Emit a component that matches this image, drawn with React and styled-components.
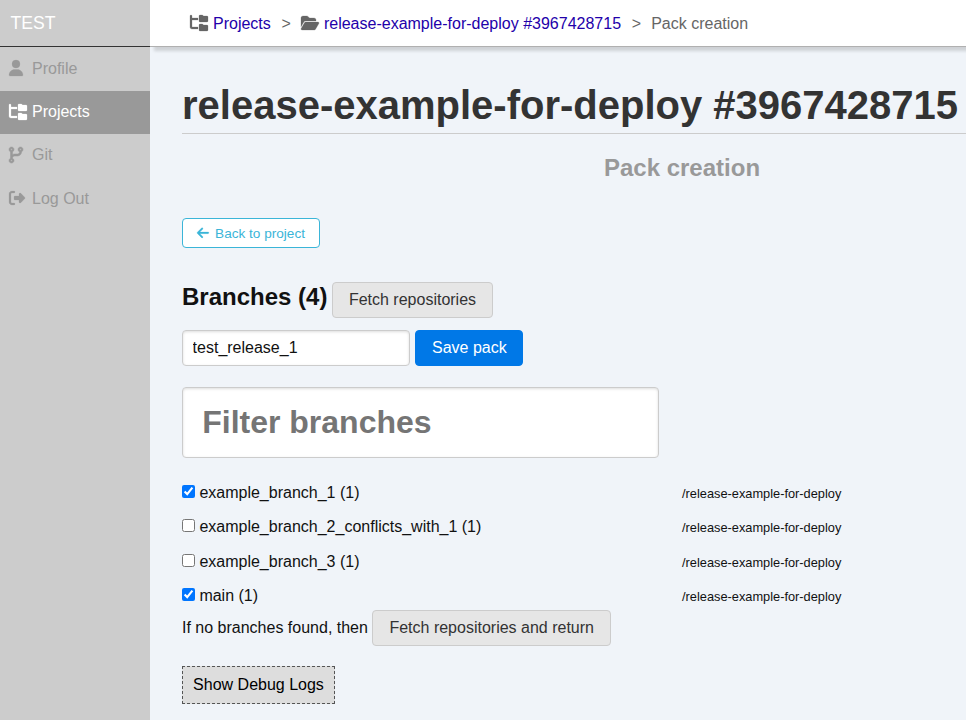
import React, { useState } from "react";
import styled, { createGlobalStyle, css } from "styled-components";
import {
  FaUser,
  FaFolderTree,
  FaCodeBranch,
  FaRightFromBracket,
  FaFolderOpen,
  FaArrowLeft,
} from "react-icons/fa6";

const GlobalStyle = createGlobalStyle`
  * { box-sizing: border-box; }
  html, body { margin: 0; height: 100%; overflow: hidden; background: #f0f4f9; }
  body { font: 16px/18px "Liberation Sans", Arial, sans-serif; color: #111; }
  button, input { font-family: inherit; }
`;

const Page = styled.div`
  display: flex;
  height: 720px;
  overflow: hidden;
`;

const Sidebar = styled.nav`
  flex: 0 0 150px;
  background: #ccc;
  z-index: 2;
`;

const Brand = styled.div`
  height: 47px;
  padding: 13px 10.5px 0;
  border-bottom: 1px solid #333;
  color: #fff;
  font-size: 17.6px;
  line-height: 20px;
`;

const MenuItem = styled.a`
  display: flex;
  align-items: center;
  height: 43.4px;
  padding: 0 0 1.2px 9px;
  color: ${(p) => (p.$active ? "#fff" : "#999")};
  background: ${(p) => (p.$active ? "#999" : "transparent")};
  text-decoration: none;
`;

const Menu = styled.div`
  padding-top: 0.6px;
`;

const Glyph = styled.span`
  display: flex;
  margin-bottom: 1px;
  svg {
    width: ${(p) => p.$w}px;
    height: ${(p) => p.$h || 16}px;
    overflow: visible;
    stroke-width: ${(p) => p.$stroke || 8}px;
  }
`;

const MenuIcon = styled(Glyph)`
  width: 23px;
`;

const Main = styled.div`
  flex: 1;
  min-width: 0;
`;

const TopBar = styled.header`
  display: flex;
  align-items: center;
  height: 47px;
  padding: 1px 0 0 40px;
  background: #fff;
  border-bottom: 1px solid #b0b0b0;
  box-shadow: 4px 4px 3px rgba(0, 0, 0, 0.14);
  color: #666;
  white-space: nowrap;
`;

const Crumb = styled.span`
  display: flex;
  align-items: center;
  gap: 5px;
`;

const CrumbLink = styled.a`
  color: #20a;
  text-decoration: none;
`;

const Separator = styled.span`
  margin: 0 10px 0 10.8px;
`;

const Content = styled.main`
  width: 1000px;
  margin-left: 32px;
`;

const Title = styled.h1`
  margin: 0;
  padding-top: 35px;
  height: 87px;
  border-bottom: 1px solid #ccc;
  color: #333;
  font-size: 40px;
  line-height: 46px;
  white-space: nowrap;
`;

const Subtitle = styled.h2`
  margin: 20px 0 36px;
  color: #999;
  font-size: 24px;
  line-height: 28px;
  text-align: center;
`;

const BackLink = styled.a`
  display: flex;
  align-items: center;
  width: 138px;
  height: 30px;
  padding: 1px 0 0 13.6px;
  gap: 6.5px;
  border: 1px solid #3bb5d8;
  border-radius: 4px;
  background: #fff;
  color: #3bb5d8;
  font-size: 13.6px;
`;

const Line = styled.div`
  display: flex;
  align-items: center;
  gap: ${(p) => p.$gap || 4.5}px;
  margin-top: ${(p) => p.$top || 0}px;
`;

const Heading = styled.h2`
  margin: 0 0 6px;
  font-size: 24px;
  line-height: 28px;
`;

const Button = styled.button`
  height: 36px;
  padding: 0 16px;
  border: 1px solid #ccc;
  border-radius: 4px;
  background: #e6e6e6;
  color: #333;
  font-size: 16px;
  line-height: 18px;
  white-space: nowrap;
  ${(p) =>
    p.$primary &&
    css`
      width: 108px;
      border-color: #0078e7;
      background: #0078e7;
      color: #fff;
    `}
`;

const Field = styled.input`
  display: block;
  width: 228px;
  height: 36px;
  padding: 0 9.6px;
  border: 1px solid #ccc;
  border-radius: 4px;
  box-shadow: inset 0 1px 3px #ddd;
  background: #fff;
  color: #111;
  font-size: 16px;
`;

const FilterField = styled(Field)`
  width: 477px;
  height: 71px;
  margin-top: 21px;
  padding: 0 19.2px;
  font-size: 32px;
  font-weight: bold;
  &::placeholder {
    color: #757575;
  }
`;

const BranchList = styled.div`
  margin-top: 17.6px;
`;

const BranchRow = styled.div`
  display: grid;
  grid-template-columns: 500px 1fr;
  align-items: center;
  height: 34.4px;
`;

const BranchLabel = styled.label`
  display: flex;
  align-items: center;
  gap: 4.4px;
`;

const Checkbox = styled.input`
  width: 13px;
  height: 13px;
  margin: 0 0 3px;
`;

const Repo = styled.span`
  padding-top: 2px;
  font-size: 12.8px;
`;

const Hint = styled(Line)`
  margin-top: -3.2px;
`;

const DebugToggle = styled.button`
  display: block;
  height: 38px;
  width: 153px;
  margin-top: 20px;
  padding: 0;
  border: 1px dashed #555;
  background: #ddd;
  color: #000;
  font-size: 16px;
`;

const menu = [
  { label: "Profile", icon: FaUser, w: 14 },
  { label: "Projects", icon: FaFolderTree, w: 18, active: true },
  { label: "Git", icon: FaCodeBranch, w: 14, stroke: 16 },
  { label: "Log Out", icon: FaRightFromBracket, w: 16 },
];

const initialBranches = [
  { name: "example_branch_1 (1)", checked: true },
  { name: "example_branch_2_conflicts_with_1 (1)", checked: false },
  { name: "example_branch_3 (1)", checked: false },
  { name: "main (1)", checked: true },
];

export default function App() {
  const [branches, setBranches] = useState(initialBranches);
  const toggle = (name) =>
    setBranches((list) =>
      list.map((b) => (b.name === name ? { ...b, checked: !b.checked } : b))
    );

  return (
    <Page>
      <GlobalStyle />
      <Sidebar>
        <Brand>TEST</Brand>
        <Menu>
          {menu.map(({ label, icon: Icon, w, stroke, active }) => (
            <MenuItem key={label} $active={active}>
              <MenuIcon $w={w} $stroke={stroke}>
                <Icon />
              </MenuIcon>
              {label}
            </MenuItem>
          ))}
        </Menu>
      </Sidebar>
      <Main>
        <TopBar>
          <Crumb>
            <Glyph $w={18}>
              <FaFolderTree />
            </Glyph>
            <CrumbLink>Projects</CrumbLink>
          </Crumb>
          <Separator>&gt;</Separator>
          <Crumb>
            <Glyph $w={18}>
              <FaFolderOpen />
            </Glyph>
            <CrumbLink>release-example-for-deploy #3967428715</CrumbLink>
          </Crumb>
          <Separator>&gt;</Separator>
          <span>Pack creation</span>
        </TopBar>
        <Content>
          <Title>release-example-for-deploy #3967428715</Title>
          <Subtitle>Pack creation</Subtitle>
          <BackLink>
            <Glyph $w={12} $h={13.6}>
              <FaArrowLeft />
            </Glyph>
            Back to project
          </BackLink>
          <Line $top={34}>
            <Heading>Branches (4)</Heading>
            <Button>Fetch repositories</Button>
          </Line>
          <Line $top={12} $gap={5}>
            <Field defaultValue="test_release_1" />
            <Button $primary>Save pack</Button>
          </Line>
          <FilterField placeholder="Filter branches" />
          <BranchList>
            {branches.map((b) => (
              <BranchRow key={b.name}>
                <BranchLabel>
                  <Checkbox
                    type="checkbox"
                    checked={b.checked}
                    onChange={() => toggle(b.name)}
                  />
                  {b.name}
                </BranchLabel>
                <Repo>/release-example-for-deploy</Repo>
              </BranchRow>
            ))}
          </BranchList>
          <Hint>
            <span>If no branches found, then</span>
            <Button>Fetch repositories and return</Button>
          </Hint>
          <DebugToggle>Show Debug Logs</DebugToggle>
        </Content>
      </Main>
    </Page>
  );
}
